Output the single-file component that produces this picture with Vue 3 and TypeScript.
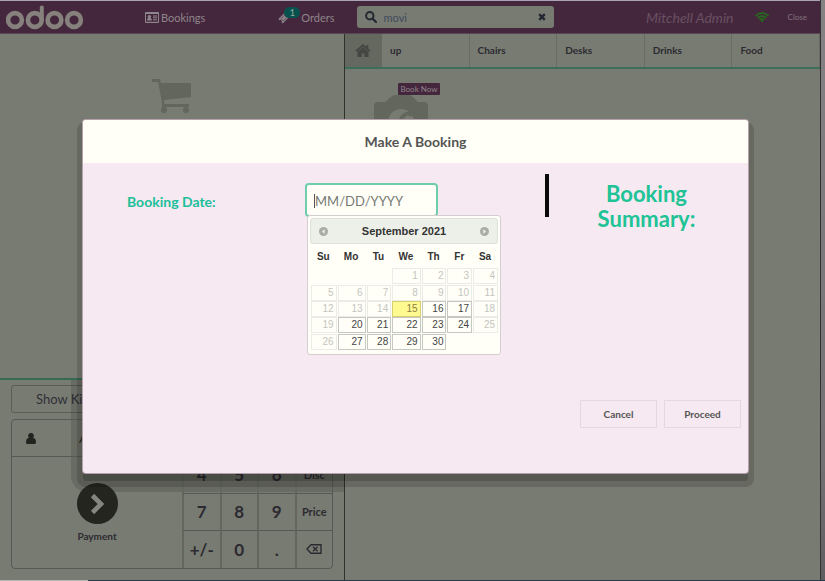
<script setup lang="ts">
import { ref } from 'vue'

interface Day { n: number; state: 'off' | 'on' | 'today' }

const query = ref('movi')
const bookingDate = ref('')
const categories: string[] = ['up', 'Chairs', 'Desks', 'Drinks', 'Food']
const keys: string[] = ['1', '2', '3', 'Qty', '4', '5', '6', 'Disc', '7', '8', '9', 'Price', '+/-', '0', '.', 'back']
const weekdays: string[] = ['Su', 'Mo', 'Tu', 'We', 'Th', 'Fr', 'Sa']

function stateOf(n: number, column: number): Day['state'] {
  if (n === 15) return 'today'
  return n > 15 && column > 0 && column < 6 ? 'on' : 'off'
}

const firstColumn = 3
const weeks: (Day | null)[][] = Array.from({ length: 5 }, (_, w) =>
  Array.from({ length: 7 }, (_, c) => {
    const n = w * 7 + c - firstColumn + 1
    return n < 1 || n > 30 ? null : { n, state: stateOf(n, c) }
  }),
)
</script>

<template>
  <div class="screen">
    <div class="pos">
      <header class="topbar">
        <svg class="logo" viewBox="0 0 78 26" role="img" aria-label="odoo">
          <g fill="none" stroke="currentColor" stroke-width="4.6">
            <circle cx="9" cy="16" r="6.900" />
            <circle cx="28.800" cy="16" r="6.900" />
            <circle cx="48.500" cy="16" r="6.900" />
            <circle cx="68" cy="16" r="6.900" />
            <path d="M35.800 16V3.500" stroke-linecap="round" stroke-width="4" />
          </g>
        </svg>
        <button class="nav bookings" type="button">
          <svg viewBox="0 0 14 11" width="14" height="11" aria-hidden="true">
            <path fill="currentColor" fill-rule="evenodd" d="M1 0h12a1 1 0 0 1 1 1v9a1 1 0 0 1-1 1H1a1 1 0 0 1-1-1V1a1 1 0 0 1 1-1zM1 2v7.800h12V2zM2 8.500c0-1.600.6-2.300 1.400-2.400a1.700 1.700 0 1 1 2 0c.8.1 1.400.8 1.400 2.400zM8 3.500h4v1H8zM8 5.300h4v1H8zM8 7.200h4v1H8z" />
          </svg>
          Bookings
        </button>
        <button class="nav orders" type="button">
          <span class="ticket">
            <svg viewBox="0 0 14 14" width="12" height="12" aria-hidden="true">
              <path fill="currentColor" d="M8.200.5 9.500 1.800a1.600 1.600 0 0 0 2.300 2.300l1.400 1.400-7.700 7.800-1.400-1.400a1.600 1.600 0 0 0-2.300-2.300L.4 8.200z" />
              <path fill="none" stroke="#45273d" stroke-width=".7" d="m7.500 3.700 2.700 2.700-4 4-2.700-2.700z" />
            </svg>
            <span class="count">1</span>
          </span>
          Orders
        </button>
        <div class="search">
          <svg viewBox="0 0 12 12" width="12" height="12" aria-hidden="true">
            <circle cx="4.800" cy="4.800" r="3.700" fill="none" stroke="currentColor" stroke-width="2" />
            <path d="m7.700 7.700 3.300 3.300" stroke="currentColor" stroke-width="2.200" stroke-linecap="round" />
          </svg>
          <input v-model="query" type="text" aria-label="Search products">
          <button type="button" aria-label="Clear search">
            <svg viewBox="0 0 8 8" width="8" height="8"><path d="m1.200 1.200 5.600 5.600M6.800 1.200 1.200 6.800" stroke="currentColor" stroke-width="2.400" /></svg>
          </button>
        </div>
        <span class="user">Mitchell Admin</span>
        <svg class="wifi" viewBox="0 0 14 10" width="14" height="10" role="img" aria-label="Connected">
          <g fill="none" stroke="currentColor" stroke-width="1.700">
            <path d="M.6 3.800a9.200 9.200 0 0 1 12.800 0" />
            <path d="M2.600 5.900a6.300 6.300 0 0 1 8.800 0" />
            <path d="M4.600 7.900a3.400 3.400 0 0 1 4.800 0" />
          </g>
          <circle cx="7" cy="8.900" r="1.100" fill="currentColor" />
        </svg>
        <button class="close" type="button">Close</button>
      </header>

      <div class="panes">
        <section class="order">
          <div class="empty">
            <svg viewBox="0 0 40 35" width="40" height="35" aria-hidden="true">
              <path fill="currentColor" d="M0 0h8l1 4h30v14L12 21l.5 4H37v3H10V23L6 3H0z" />
              <circle cx="12" cy="31" r="3" fill="currentColor" />
              <circle cx="34" cy="31" r="3" fill="currentColor" />
            </svg>
          </div>
          <div class="controls">
            <button class="kitchen" type="button">Show Kitchen</button>
            <div class="pad">
              <div class="actions">
                <button class="customer" type="button">
                  <svg viewBox="0 0 10 11" width="10" height="11" aria-hidden="true">
                    <path fill="currentColor" d="M5 0a2.700 2.700 0 0 1 2 4.700C9 5 10 6.500 10 9.200c0 1.100-.6 1.800-1.500 1.800h-7C.6 11 0 10.300 0 9.200 0 6.500 1 5 3 4.700A2.700 2.700 0 0 1 5 0z" />
                  </svg>
                  <span>Azure Interior</span>
                </button>
                <button class="payment" type="button">
                  <span class="disc">
                    <svg viewBox="0 0 16 22" width="16" height="22" aria-hidden="true"><path d="m3.500 2.500 8.500 8.500-8.500 8.500" fill="none" stroke="currentColor" stroke-width="4.600" /></svg>
                  </span>
                  Payment
                </button>
              </div>
              <div class="keys">
                <button v-for="(key, i) in keys" :key="key" type="button" :class="{ mode: i % 4 === 3 }" :aria-label="key === 'back' ? 'Backspace' : undefined">
                  <svg v-if="key === 'back'" viewBox="0 0 16 10" width="16" height="10">
                    <path d="M5 .7h10v8.600H5L1 5zM7 2.700l4.600 4.600M11.600 2.700 7 7.300" fill="none" stroke="currentColor" stroke-width="1.400" />
                  </svg>
                  <template v-else>{{ key }}</template>
                </button>
              </div>
            </div>
          </div>
        </section>

        <section class="products">
          <nav class="categories">
            <button class="home" type="button" aria-label="Home">
              <svg viewBox="0 0 16 13" width="16" height="13">
                <path d="M1 7.200 8 1.300l7 5.900M12.300 1v4" fill="none" stroke="currentColor" stroke-width="1.900" />
                <path fill="currentColor" d="M8 3.200 13.500 7.800V13H9.300V9.500H6.700V13H2.500V7.800z" />
              </svg>
            </button>
            <button v-for="c in categories" :key="c" type="button">{{ c }}</button>
          </nav>
          <div class="product">
            <button class="book" type="button">Book Now</button>
            <svg viewBox="0 0 54 46" width="54" height="46" aria-hidden="true">
              <path fill="currentColor" fill-rule="evenodd" d="M22 0h12q3 0 5 2l5 5h6q4 0 4 4v31q0 4-4 4H4q-4 0-4-4V11q0-4 4-4h7l6-5q2-2 5-2zM27 14a13 13 0 1 0 .1 0z" />
              <path fill="currentColor" d="M25 27a10 10 0 0 1 15-9l-3 4-3-2z" />
            </svg>
          </div>
        </section>
      </div>
    </div>
    <div class="edge"></div>
    <div class="taskbar"><span></span></div>

    <div class="overlay">
      <div class="modal" role="dialog" aria-labelledby="dialog-title">
        <h1 id="dialog-title">Make A Booking</h1>
        <form class="body" @submit.prevent>
          <label for="booking-date">Booking Date:</label>
          <div class="field">
            <input id="booking-date" v-model="bookingDate" type="text" placeholder="MM/DD/YYYY">
            <span class="caret"></span>
            <div class="picker">
              <div class="month">
                <button type="button" aria-label="Previous month">
                  <svg viewBox="0 0 9 9" width="9" height="9"><circle cx="4.500" cy="4.500" r="4.500" fill="currentColor" /><path d="M5.700 2.200v4.600L2.900 4.500z" fill="#edf0e9" /></svg>
                </button>
                <strong>September 2021</strong>
                <button type="button" aria-label="Next month">
                  <svg viewBox="0 0 9 9" width="9" height="9"><circle cx="4.500" cy="4.500" r="4.500" fill="currentColor" /><path d="M3.300 2.200v4.600l2.800-2.300z" fill="#edf0e9" /></svg>
                </button>
              </div>
              <table>
                <thead>
                  <tr><th v-for="d in weekdays" :key="d" scope="col">{{ d }}</th></tr>
                </thead>
                <tbody>
                  <tr v-for="(week, w) in weeks" :key="w">
                    <td v-for="(day, c) in week" :key="c">
                      <button v-if="day" type="button" :class="day.state" :disabled="day.state === 'off'">{{ day.n }}</button>
                    </td>
                  </tr>
                </tbody>
              </table>
            </div>
          </div>
          <div class="bar"></div>
          <h2>Booking Summary:</h2>
          <footer>
            <button type="button">Cancel</button>
            <button type="submit">Proceed</button>
          </footer>
        </form>
      </div>
    </div>
  </div>
</template>

<style>
body { margin: 0; }
</style>

<style scoped>
* { box-sizing: border-box; }
button, input { font: inherit; color: inherit; background: none; border: 0; padding: 0; margin: 0; }
svg { display: block; flex: none; }
.screen {
  position: relative;
  display: grid;
  grid-template: 1fr 1px / 1fr 5px;
  height: 100vh;
  overflow: hidden;
  font-family: Lato, sans-serif;
  color: #2c2a31;
  background: #787b71;
}
.pos { display: flex; flex-direction: column; min-width: 0; min-height: 0; border-top: 1px solid #aaa2b5; }
.edge { border-left: 1px solid #333236; background: linear-gradient(#858283, #747173 80%, #5f5d60); }
.taskbar { grid-column: 1 / -1; background: #263b4b; }
.taskbar span { display: block; width: 88px; height: 1px; background: #b6b6b3; }

.topbar { display: flex; align-items: center; flex: none; height: 33px; padding: 0 13px 0 6px; color: #8d858b; background: #45273d; border-bottom: 1px solid #5a4554; }
.logo { width: 78px; height: 26px; color: #86817d; }
.nav { display: flex; align-items: center; gap: 2px; font-size: 11px; }
.bookings { margin-left: 61px; }
.orders { margin-left: 73px; gap: 8px; }
.ticket { position: relative; width: 15px; }
.ticket svg { margin-top: 2px; }
.count { position: absolute; left: 6px; top: -3px; width: 16px; height: 11px; border-radius: 6px; background: #07524f; color: #9aa8a1; font-size: 9px; line-height: 11px; text-align: center; }
.search { display: flex; align-items: center; gap: 7px; width: 197px; height: 22px; margin-left: 22px; padding: 0 8px; border-radius: 3px; background: #787b71; color: #242833; }
.search input { flex: 1; min-width: 0; font-size: 11px; color: #3f4a5c; outline: 0; }
.user { margin-left: auto; font-size: 14px; font-style: italic; color: #685162; }
.wifi { margin-left: 21px; color: #256b1c; }
.close { margin-left: 19px; font-size: 8px; color: #81727c; }

.panes { display: grid; grid-template-columns: 345px 1fr; flex: 1; min-height: 0; }
.order { display: flex; flex-direction: column; border-right: 1px solid #2f322b; }
.empty { flex: 1; display: flex; justify-content: center; padding-top: 45px; color: #62665c; }
.controls { position: relative; overflow: hidden; padding: 5px 11px 11px; border-top: 2px solid #356b50; }
.controls::before { content: ""; position: absolute; left: 71px; right: -20px; top: -20px; bottom: 88px; border-radius: 16px; background: rgba(0, 0, 0, .13); }
.kitchen { display: block; width: 160px; height: 28px; padding-left: 24px; border: 1px solid #5b5e55; border-radius: 3px; font-size: 13px; text-align: left; color: #30303a; }
.pad { position: relative; display: grid; grid-template-columns: 1fr 150px; margin-top: 6px; border: 1px solid #565951; border-radius: 4px; }
.actions { display: flex; flex-direction: column; }
.customer { display: flex; align-items: center; gap: 43px; height: 37px; padding-left: 14px; border-bottom: 1px solid #565951; font-size: 12px; color: #23241f; white-space: nowrap; }
.payment { flex: 1; display: flex; flex-direction: column; align-items: center; justify-content: center; gap: 6px; font-size: 10px; font-weight: 700; }
.disc { display: grid; place-items: center; width: 41px; height: 41px; border-radius: 50%; background: #23251e; color: #85877e; }
.keys { display: grid; grid-template-columns: repeat(4, 1fr); }
.keys button { display: grid; place-items: center; height: 37px; padding-bottom: 1px; border-left: 2px solid #64675e; border-bottom: 1px solid #565951; font-size: 17px; font-weight: 700; }
.keys button:nth-last-child(-n+4) { border-bottom: 0; }
.keys button.mode { font-size: 11px; }

.products { min-width: 0; }
.categories { display: flex; height: 35px; border-bottom: 2px solid #3b6f57; }
.categories button { flex: 1; padding: 0 0 1px 8px; border-right: 1px solid #686b62; font-size: 10px; font-weight: 700; text-align: left; }
.categories .home { flex: none; display: grid; place-items: center; width: 37px; padding: 0 2px 0 0; border: 0; color: #454744; background: #65685f; }
.product { display: flex; flex-direction: column; align-items: center; width: 86px; margin: 14px 0 0 13px; color: #62665c; }
.book { height: 12px; margin-left: 36px; padding: 0 2px; border-radius: 1px; background: #45273d; color: #8f858b; font-size: 8px; line-height: 12px; white-space: nowrap; }

.overlay { position: absolute; inset: 0; padding: 120px 77px 0 83px; }
.modal { min-height: 353px; border-radius: 3px; background: #f7e9f1; box-shadow: 0 0 0 1px #b3a1ab, 0 8px 0 0 rgba(0, 0, 0, .16), 0 8px 0 6px rgba(0, 0, 0, .14); }
h1, h2 { margin: 0; }
h1 { height: 43px; border-radius: 3px 3px 0 0; background: #fffff8; font-size: 14px; line-height: 43px; text-align: center; color: #555; }
.body { display: grid; grid-template-columns: 222px 240px 4px 1fr; grid-template-rows: 237px auto; }
label { padding: 31px 0 0 44px; font-size: 14px; line-height: 16px; font-weight: 700; color: #20bf9b; }
.field { position: relative; padding-top: 20px; }
.field > input { width: 133px; height: 34px; padding: 1px 8px 0; border: 2px solid #6eceac; border-radius: 4px; outline: 0; font-size: 13px; color: #555; background: #fffff8; }
.field > input::placeholder { color: #777a74; opacity: 1; }
.caret { position: absolute; left: 9px; top: 31px; width: 1px; height: 14px; background: #555; }
.picker { position: absolute; left: 2px; top: 52px; width: 194px; padding: 2px 2px 4px; border: 1px solid #d4ced0; border-radius: 3px; background: #fffff8; font-family: "Liberation Sans", sans-serif; font-size: 10px; color: #444; }
.month { display: flex; align-items: center; justify-content: space-between; height: 26px; padding: 0 8px; border: 1px solid #dde0da; border-radius: 3px; background: #edf0e9; font-size: 11px; color: #333; }
.month button { color: #a9aca7; }
table { width: 100%; height: 106px; border-collapse: collapse; }
th { height: 24px; padding: 0 3px; font-size: 10px; text-align: center; color: #333; }
td { padding: 0 0 0 1px; height: 16px; }
tbody { line-height: 14px; }
td button { display: block; width: 100%; height: 16px; padding: 0 2px; border: 1px solid #c6c9c1; text-align: right; }
td .off { border-color: #ebece6; color: #c4c5bf; }
td .today { border-color: #d8d070; background: #fffa90; color: #8c7d45; }
.bar { height: 43px; margin-top: 11px; background: #0a0a0a; }
h2 { padding: 18px 24px 0 20px; font-size: 22px; line-height: 25px; text-align: center; color: #20c396; }
footer { grid-column: 1 / -1; display: flex; justify-content: flex-end; gap: 7px; padding-right: 7px; }
footer button { width: 77px; height: 28px; border: 1px solid #e6d8df; font-size: 10px; font-weight: 700; color: #555; }
</style>
